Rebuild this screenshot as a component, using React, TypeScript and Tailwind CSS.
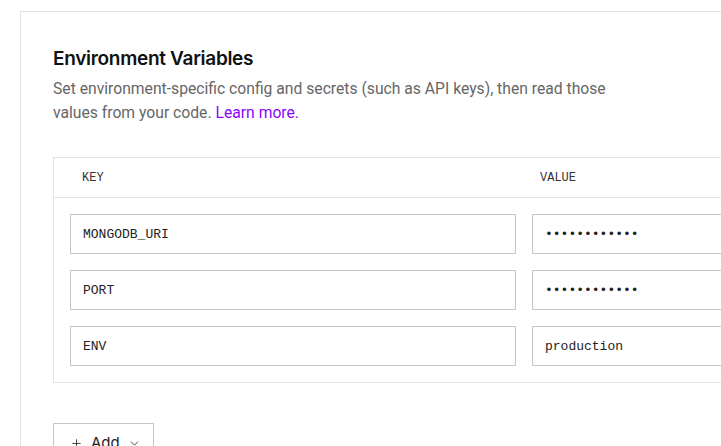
import React from 'react';
import { Plus, ChevronDown } from 'lucide-react';

interface EnvVar {
  key: string;
  value: string;
  secret: boolean;
}

const vars: EnvVar[] = [
  { key: 'MONGODB_URI', value: 'mongodb+srv://', secret: true },
  { key: 'PORT', value: '100000000000', secret: true },
  { key: 'ENV', value: 'production', secret: false },
];

const mono = "font-['Liberation_Mono','DejaVu_Sans_Mono',monospace]";

const EnvRow: React.FC<{ item: EnvVar }> = ({ item }) => (
  <div className="flex gap-4">
    <input
      readOnly
      value={item.key}
      className={`w-[446px] h-10 shrink-0 border border-[#c6c6c6] px-3 text-[13px] text-[#222] outline-none ${mono}`}
    />
    <input
      readOnly
      type={item.secret ? 'password' : 'text'}
      value={item.secret ? '............' : item.value}
      className={`w-[446px] h-10 shrink-0 border border-[#c6c6c6] px-3 text-[13px] text-[#222] outline-none ${mono}`}
    />
  </div>
);

export default function App() {
  return (
    <div className="w-[721px] h-[446px] overflow-hidden bg-white font-['Inter','Liberation_Sans',sans-serif]">
      <div className="ml-5 mt-[11px] w-[1000px] border border-[#e2e2e2] pl-8 pt-[33px] pb-10">
        <h2 className="text-[19px] leading-7 font-semibold text-[#111] tracking-[-0.3px]">
          Environment Variables
        </h2>
        <p className="mt-1 w-[600px] font-['Roboto','Inter',sans-serif] text-[15.7px] leading-6 text-[#666]">
          Set environment-specific config and secrets (such as API keys), then read those
          <br />
          values from your code. <span className="text-[#8a05ff]">Learn more.</span>
        </p>

        <div className="mt-8 w-[942px] border border-[#e4e4e4]">
          <div className={`flex h-10 items-center border-b border-[#e4e4e4] text-[12px] text-[#333] ${mono}`}>
            <div className="w-[486px] pl-7">KEY</div>
            <div>VALUE</div>
          </div>
          <div className="flex flex-col gap-4 px-4 pt-4 pb-4">
            {vars.map((v) => (
              <EnvRow key={v.key} item={v} />
            ))}
          </div>
        </div>

        <button className="mt-10 flex h-10 w-[101px] items-center border border-[#c6c6c6] pl-4 pr-3 text-[15px] text-[#222]">
          <Plus size={13} strokeWidth={1.5} />
          <span className="ml-2">Add</span>
          <ChevronDown size={13} strokeWidth={1.5} className="ml-auto" />
        </button>
      </div>
    </div>
  );
}
